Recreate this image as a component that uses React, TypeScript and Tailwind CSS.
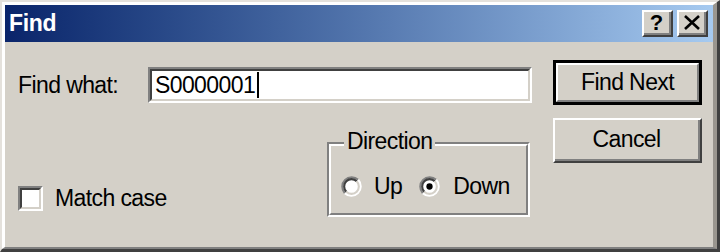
import React from "react";

function Radio({ checked }: { checked?: boolean }) {
  return (
    <svg width="21" height="21" viewBox="0 0 20 20" className="shrink-0">
      <circle cx="10" cy="10" r="8.5" fill="#ffffff" />
      <path d="M3.64 16.36 A9 9 0 0 1 16.36 3.64" fill="none" stroke="#808080" strokeWidth="2" />
      <path d="M16.36 3.64 A9 9 0 0 1 3.64 16.36" fill="none" stroke="#ffffff" strokeWidth="2" />
      <path d="M5.05 14.95 A7 7 0 0 1 14.95 5.05" fill="none" stroke="#404040" strokeWidth="2" />
      <path d="M14.95 5.05 A7 7 0 0 1 5.05 14.95" fill="none" stroke="#d4d0c8" strokeWidth="2" />
      {checked && <circle cx="10" cy="10" r="3" fill="#000000" />}
    </svg>
  );
}

function TitleBtn({ children }: { children: React.ReactNode }) {
  return (
    <div className="w-[31px] h-[27px] bg-[#d4d0c8] border-t-2 border-l-2 border-r-2 border-b-2 border-t-white border-l-white border-r-[#404040] border-b-[#404040]">
      <div className="w-full h-full flex items-center justify-center border-r-2 border-b-2 border-r-[#808080] border-b-[#808080]">
        {children}
      </div>
    </div>
  );
}

export default function App() {
  return (
    <div className="w-[720px] h-[252px] bg-[#d4d0c8] font-['Liberation_Sans',Arial,sans-serif] text-black text-[23px] tracking-[-0.6px] border-t-2 border-l-2 border-r-[3px] border-b-[3px] border-t-[#e4e1dc] border-l-[#e4e1dc] border-r-[#404040] border-b-[#404040]">
      <div className="h-full flex flex-col border-t-[3px] border-l-[3px] border-r-4 border-b-2 border-t-white border-l-white border-r-[#9a968f] border-b-[#808080]">
        {/* title bar */}
        <div className="h-[37px] shrink-0 flex items-center bg-linear-to-r from-[#0a246a] to-[#a6caf0] pl-[4px] pr-[5px]">
          <span className="text-white font-bold text-[23px] tracking-[-0.3px] leading-none">Find</span>
          <div className="ml-auto flex gap-[4px]">
            <TitleBtn>
              <span className="font-bold text-[22px] leading-none tracking-normal">?</span>
            </TitleBtn>
            <TitleBtn>
              <svg width="18" height="15" viewBox="0 0 18 15">
                <path d="M2 1 L16 14 M16 1 L2 14" stroke="#000" strokeWidth="2.6" />
              </svg>
            </TitleBtn>
          </div>
        </div>

        {/* body */}
        <div className="flex-1 flex pl-[13px]">
          <div className="w-[514px] flex flex-col">
            {/* Find what row */}
            <div className="mt-[25px] h-[36px] flex items-center">
              <span className="w-[130px] shrink-0">Find what:</span>
              <div className="w-[384px] h-[36px] border-t-2 border-l-2 border-r-2 border-b-2 border-t-[#808080] border-l-[#808080] border-r-white border-b-white">
                <div className="w-full h-full bg-white flex items-center pl-[3px] border-t-2 border-l-2 border-r-2 border-b-2 border-t-[#404040] border-l-[#404040] border-r-[#d4d0c8] border-b-[#d4d0c8]">
                  <span className="leading-none">S0000001</span>
                  <span className="w-[2px] h-[26px] bg-black ml-[2px]" />
                </div>
              </div>
            </div>

            {/* second row */}
            <div className="mt-[39px] flex items-end">
              <div className="flex items-center mb-[6px]">
                <div className="w-[25px] h-[25px] border-t-2 border-l-2 border-r-2 border-b-2 border-t-[#808080] border-l-[#808080] border-r-white border-b-white">
                  <div className="w-full h-full bg-white border-t-2 border-l-2 border-r-2 border-b-2 border-t-[#404040] border-l-[#404040] border-r-[#d4d0c8] border-b-[#d4d0c8]" />
                </div>
                <span className="ml-[12px] leading-none">Match case</span>
              </div>

              <div className="ml-auto mr-[2px] w-[203px] h-[75px] relative border-t-2 border-l-2 border-r-2 border-b-2 border-t-[#808080] border-l-[#808080] border-r-white border-b-white">
                <div className="w-full h-full border-t-2 border-l-2 border-r-2 border-b-2 border-t-white border-l-white border-r-[#808080] border-b-[#808080] pt-[26px] pl-[10px]">
                  <div className="h-[28px] flex items-center">
                    <Radio />
                    <span className="ml-[12px] leading-none">Up</span>
                    <span className="ml-[17px]">
                      <Radio checked />
                    </span>
                    <span className="ml-[13px] leading-none">Down</span>
                  </div>
                </div>
                <span className="absolute left-[15px] top-[-15px] px-[3px] bg-[#d4d0c8] leading-[24px]">Direction</span>
              </div>
            </div>
          </div>

          {/* buttons */}
          <div className="ml-[21px] mt-[18px] flex flex-col gap-[13px]">
            <div className="w-[149px] h-[45px] border-[3px] border-black">
              <div className="w-full h-full flex items-center justify-center border-t-2 border-l-2 border-r-2 border-b-2 border-t-white border-l-white border-r-[#808080] border-b-[#808080]">
                <span className="leading-none">Find Next</span>
              </div>
            </div>
            <div className="w-[149px] h-[45px] border-t-2 border-l-2 border-r-2 border-b-2 border-t-white border-l-white border-r-[#404040] border-b-[#404040]">
              <div className="w-full h-full flex items-center justify-center border-r-2 border-b-2 border-r-[#808080] border-b-[#808080]">
                <span className="leading-none">Cancel</span>
              </div>
            </div>
          </div>
        </div>
      </div>
    </div>
  );
}
